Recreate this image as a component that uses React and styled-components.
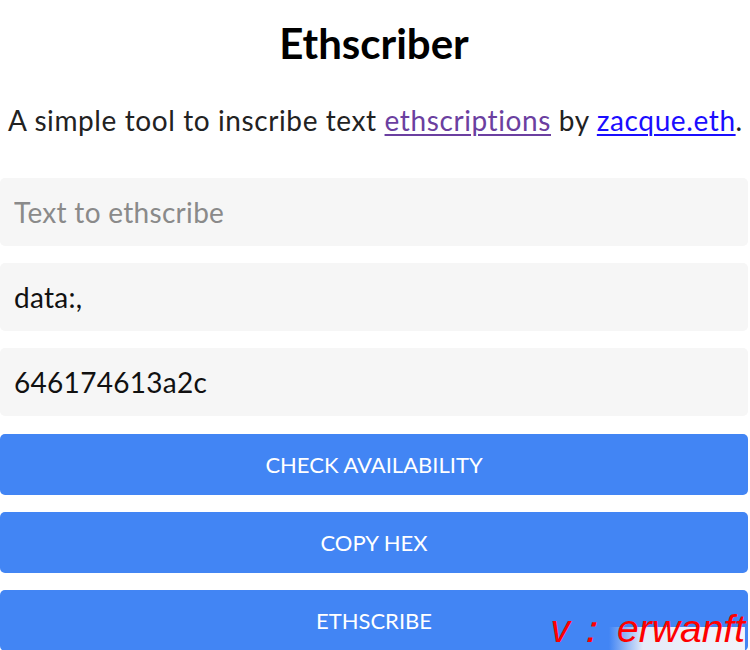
import React from "react";
import styled, { createGlobalStyle } from "styled-components";

const GlobalStyle = createGlobalStyle`
  html, body {
    margin: 0;
    padding: 0;
    background: #ffffff;
  }
  body {
    font-family: "Lato", "Noto Sans", sans-serif;
  }
`;

const Page = styled.div`
  position: relative;
  width: 750px;
  height: 650px;
  overflow: hidden;
  display: flex;
  flex-direction: column;
  padding: 0 2px 0 0;
  box-sizing: border-box;
`;

const Title = styled.h1`
  margin: 20px 0 0;
  text-align: center;
  font-size: 42px;
  font-weight: 700;
  line-height: 46px;
  color: #000;
`;

const Intro = styled.p`
  margin: 36px 0 0 8px;
  font-size: 28px;
  letter-spacing: 0.6px;
  line-height: 36px;
  color: #222;
  white-space: nowrap;
`;

const Link = styled.a`
  color: ${(p) => (p.$visited ? "#6b3fa0" : "#1a0dff")};
  text-decoration: underline;
  text-decoration-thickness: 2px;
  text-underline-offset: 3px;
`;

const Form = styled.div`
  display: flex;
  flex-direction: column;
  gap: 17px;
  margin-top: 40px;
`;

const Field = styled.input`
  box-sizing: border-box;
  width: 100%;
  height: 68px;
  border: none;
  border-radius: 5px;
  background: #f6f6f6;
  padding: 0 14px;
  font-family: inherit;
  font-size: 28px;
  letter-spacing: 0.3px;
  color: #111;
  outline: none;
  &::placeholder {
    color: #8a8a8a;
  }
`;

const Actions = styled.div`
  display: flex;
  flex-direction: column;
  gap: 17px;
  margin-top: 18px;
`;

const Button = styled.button`
  flex-shrink: 0;
  height: 61px;
  width: 100%;
  border: none;
  border-radius: 5px;
  background: #4285f4;
  color: #ffffff;
  font-family: inherit;
  font-size: 22px;
  text-transform: uppercase;
  cursor: pointer;
`;

const Watermark = styled.div`
  position: absolute;
  right: 5px;
  bottom: 0;
  display: flex;
  align-items: flex-end;
  font-family: "Liberation Sans", sans-serif;
  font-style: italic;
  font-size: 39px;
  line-height: 42px;
  color: #ff0000;
`;

const Blur = styled.span`
  padding-left: 8px;
  background: linear-gradient(90deg, rgba(223, 231, 247, 0) 0%, #e4ebf8 25%, #f2f5fb 100%) bottom / 100% 55% no-repeat;
`;

export default function App() {
  return (
    <>
      <GlobalStyle />
      <Page>
        <Title>Ethscriber</Title>
        <Intro>
          A simple tool to inscribe text{" "}
          <Link $visited href="#">ethscriptions</Link> by{" "}
          <Link href="#">zacque.eth</Link>.
        </Intro>
        <Form>
          <Field placeholder="Text to ethscribe" />
          <Field defaultValue="data:," />
          <Field defaultValue="646174613a2c" />
        </Form>
        <Actions>
          <Button>Check availability</Button>
          <Button>Copy hex</Button>
          <Button>Ethscribe</Button>
        </Actions>
        <Watermark>
          v：<Blur>erwanft</Blur>
        </Watermark>
      </Page>
    </>
  );
}
